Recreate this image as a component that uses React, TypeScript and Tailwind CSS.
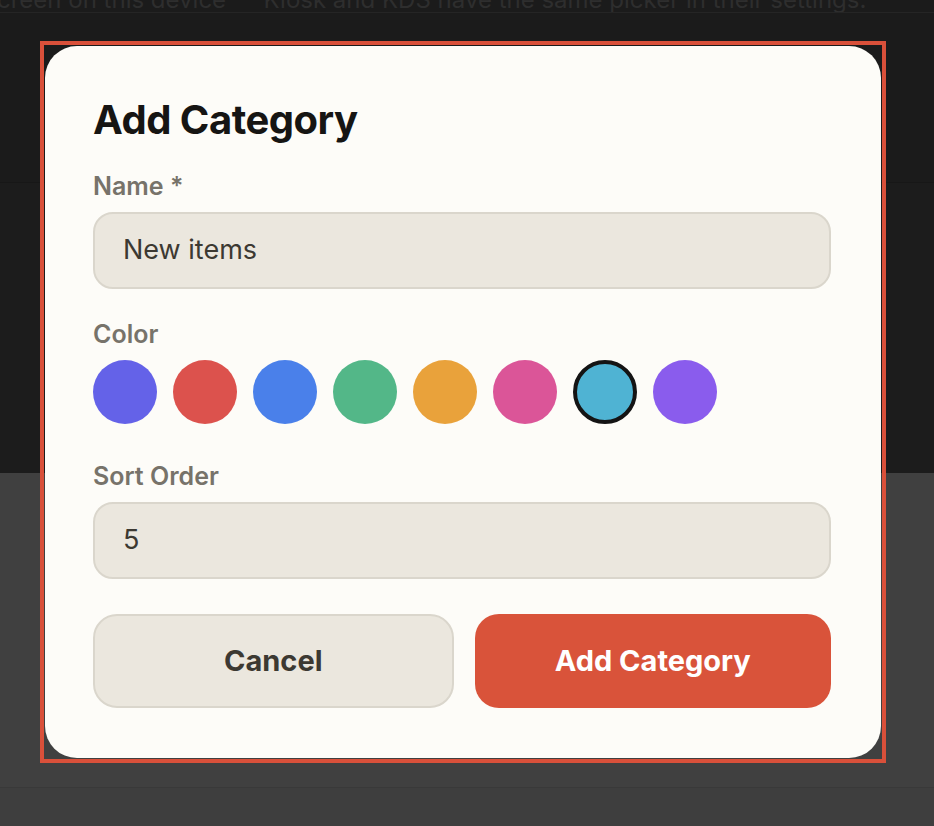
const swatches = [
  "#6462e8",
  "#dc524d",
  "#4a80ea",
  "#53b788",
  "#e9a23b",
  "#db5598",
  "#4fb3d3",
  "#8a5ced",
];

const selected = 6;

function Field({ label, value }: { label: string; value: string }) {
  return (
    <div className="flex flex-col">
      <label className="h-[34px] text-[25px] font-semibold leading-[34px] text-[#77736a]">
        {label}
      </label>
      <div className="mt-[9px] flex h-[77px] items-center rounded-[20px] border-2 border-[#dad6cc] bg-[#ebe7de] px-[28px] text-[27px] text-[#3c3932]">
        {value}
      </div>
    </div>
  );
}

export default function App() {
  return (
    <div
      className="relative h-[826px] w-[934px] overflow-hidden bg-[#1b1b1b]"
      style={{ fontFamily: "Inter, 'Noto Sans', sans-serif" }}
    >
      {/* page behind the overlay */}
      <div className="flex h-[13px] items-end overflow-hidden border-b border-[#252525]">
        <p className="ml-[-3px] whitespace-nowrap text-[24px] leading-[24px] text-[#2e2e2e]">
          creen on this device — Kiosk and KDS have the same picker in their
          settings.
        </p>
      </div>
      <div className="h-[170px] border-b border-[#171717] bg-[#1b1b1b]" />
      <div className="h-[290px] bg-[#1c1c1c]" />
      <div className="h-[315px] border-b border-[#393939] bg-[#404040]" />
      <div className="h-[38px] bg-[#3e3e3e]" />

      {/* modal */}
      <div className="absolute left-[40px] top-[41px] h-[722px] w-[846px] border-4 border-[#d9503a] p-px">
        <div className="flex h-full flex-col rounded-[32px] bg-[#fdfcf8] pb-[49px] pl-[48px] pr-[50px] pt-[46px]">
          <h2 className="text-[40px] font-bold leading-[56px] tracking-[-0.5px] text-[#161513]">
            Add Category
          </h2>
          <div className="mt-[21px]">
            <Field label="Name *" value="New items" />
          </div>
          <div className="mt-[28px] flex flex-col">
            <span className="h-[34px] text-[25px] font-semibold leading-[34px] text-[#77736a]">
              Color
            </span>
            <div className="mt-[9px] flex gap-[16px]">
              {swatches.map((c, i) => (
                <span
                  key={c}
                  className={
                    i === selected
                      ? "size-[64px] rounded-full border-[4px] border-[#141414]"
                      : "size-[64px] rounded-full"
                  }
                  style={{ backgroundColor: c }}
                />
              ))}
            </div>
          </div>
          <div className="mt-[35px]">
            <Field label="Sort Order" value="5" />
          </div>
          <div className="mt-[35px] flex gap-[21px]">
            <button className="h-[94px] flex-1 rounded-[24px] border-2 border-[#dad6cc] bg-[#ebe7de] text-[29px] font-bold text-[#3c3932]">
              Cancel
            </button>
            <button className="h-[94px] flex-1 rounded-[24px] bg-[#d9533a] text-[29px] font-bold text-white">
              Add Category
            </button>
          </div>
        </div>
      </div>
    </div>
  );
}
